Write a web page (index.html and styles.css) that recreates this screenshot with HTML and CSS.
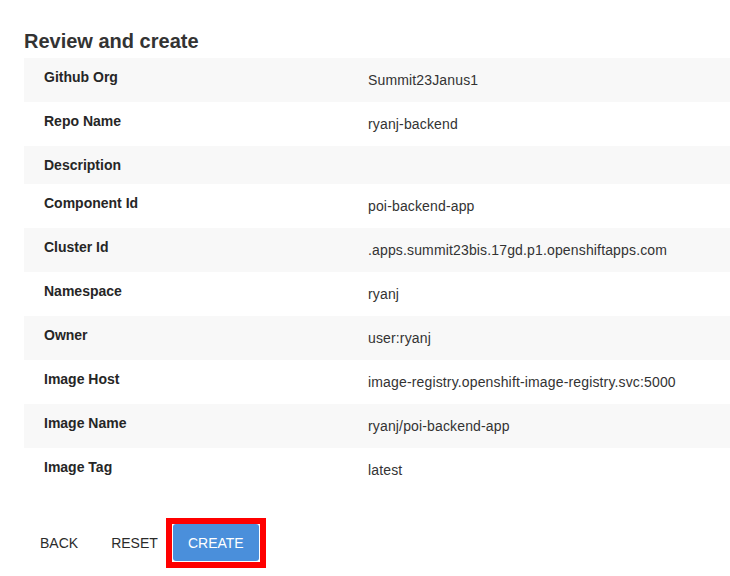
FILE: index.html
```html
<!DOCTYPE html>
<html>
<head>
<meta charset="utf-8">
<link rel="stylesheet" href="styles.css">
</head>
<body>
<div class="page">
  <h2 class="title">Review and create</h2>
  <div class="table">
    <div class="row shaded"><div class="label">Github Org</div><div class="value">Summit23Janus1</div></div>
    <div class="row"><div class="label">Repo Name</div><div class="value">ryanj-backend</div></div>
    <div class="row shaded"><div class="label">Description</div><div class="value"></div></div>
    <div class="row"><div class="label">Component Id</div><div class="value">poi-backend-app</div></div>
    <div class="row shaded"><div class="label">Cluster Id</div><div class="value">.apps.summit23bis.17gd.p1.openshiftapps.com</div></div>
    <div class="row"><div class="label">Namespace</div><div class="value">ryanj</div></div>
    <div class="row shaded"><div class="label">Owner</div><div class="value">user:ryanj</div></div>
    <div class="row"><div class="label">Image Host</div><div class="value">image-registry.openshift-image-registry.svc:5000</div></div>
    <div class="row shaded"><div class="label">Image Name</div><div class="value">ryanj/poi-backend-app</div></div>
    <div class="row"><div class="label">Image Tag</div><div class="value">latest</div></div>
  </div>
  <div class="actions">
    <button class="btn text back">BACK</button>
    <button class="btn text reset">RESET</button>
    <span class="highlight"><button class="btn primary">CREATE</button></span>
  </div>
</div>
</body>
</html>
```

FILE: styles.css
```css
html, body {
  margin: 0;
  padding: 0;
  background: #ffffff;
}
body {
  font-family: "Liberation Sans", Arial, Helvetica, sans-serif;
  color: #333333;
}
.page {
  padding: 29px 0 0 24px;
}
.title {
  margin: 0;
  font-size: 20px;
  line-height: 24px;
  font-weight: 700;
  color: #333333;
  height: 29px;
}
.table {
  display: flex;
  flex-direction: column;
}
.row {
  display: flex;
  align-items: flex-start;
}
.row.shaded {
  background: #f8f8f8;
}
.label {
  width: 324px;
  flex: none;
  padding: 9px 0 9px 20px;
  font-size: 14px;
  line-height: 20px;
  font-weight: 700;
  color: #262626;
}
.value {
  flex: 1;
  padding: 12px 0;
  font-size: 14px;
  line-height: 20px;
  letter-spacing: 0.15px;
  color: #333333;
}
.actions {
  display: flex;
  align-items: center;
  margin-top: 26px;
}
.btn {
  font-family: "Liberation Sans", Arial, Helvetica, sans-serif;
  font-size: 14px;
  line-height: 20px;
  border: none;
  background: none;
  cursor: pointer;
  padding: 0;
}
.btn.text {
  color: #2b2b2b;
  height: 37px;
}
.back {
  margin-left: 16px;
}
.reset {
  margin-left: 33px;
}
.highlight {
  display: inline-flex;
  margin-left: 8px;
  border: 6px solid #ff0000;
  padding: 0 1px 1px 1px;
}
.btn.primary {
  width: 86px;
  height: 37px;
  background: #4a8fdb;
  color: #ffffff;
  border-radius: 3px;
}
```
